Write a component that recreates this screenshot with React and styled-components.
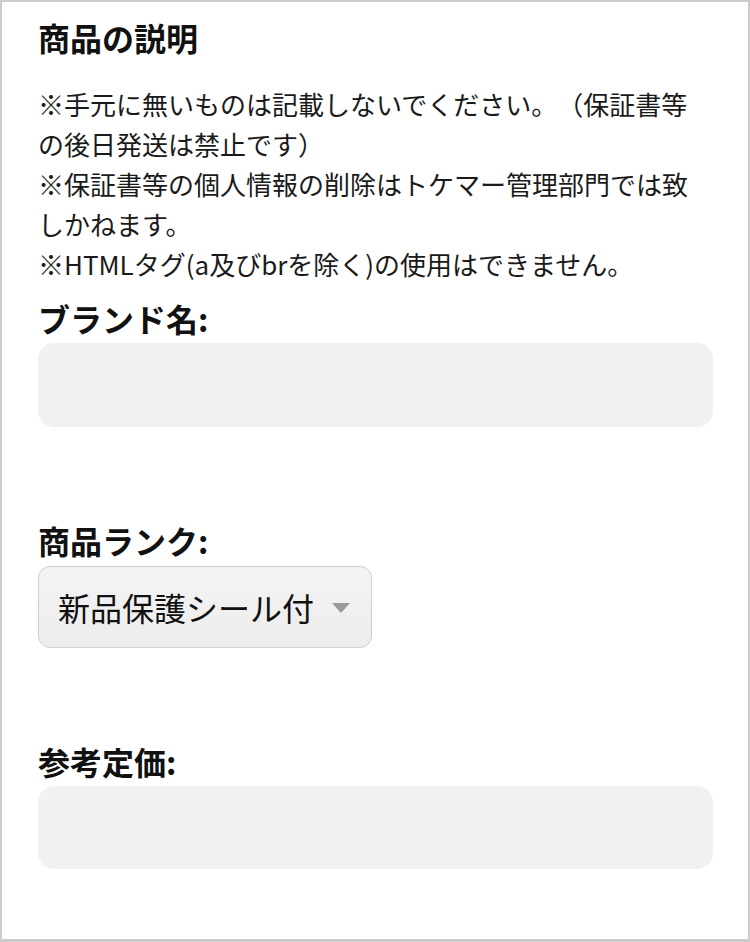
import React from 'react'
import styled, { createGlobalStyle } from 'styled-components'

const GlobalStyle = createGlobalStyle`
html, body {
    margin: 0;
    padding: 0;
    background: #fff;
}
body {
    font-family: "Noto Sans CJK JP", "Noto Sans", sans-serif;
    color: #111;
}
`

function App() {
    return (
        <>
            <GlobalStyle />
            <Frame>
                <Heading>商品の説明</Heading>
                <Notes>
                    <p>※手元に無いものは記載しないでください。（保証書等の後日発送は禁止です）</p>
                    <p>※保証書等の個人情報の削除はトケマー管理部門では致しかねます。</p>
                    <p>※HTMLタグ(a及びbrを除く)の使用はできません。</p>
                </Notes>

                <Field>
                    <Label>ブランド名:</Label>
                    <TextBox type="text" />
                </Field>

                <Field $spaced>
                    <Label>商品ランク:</Label>
                    <Select>
                        <span>新品保護シール付</span>
                        <svg width="18" height="10" viewBox="0 0 18 10">
                            <path d="M0 0 L18 0 L9 10 Z" fill="#9a9a9a" />
                        </svg>
                    </Select>
                </Field>

                <Field $spaced>
                    <Label>参考定価:</Label>
                    <TextBox type="text" $short />
                </Field>
            </Frame>
        </>
    )
}

export default App

const Frame = styled.div`
box-sizing: border-box;
width: 750px;
height: 942px;
border: 2px solid #cccccc;
border-bottom-width: 3px;
padding: 13px 35px 0 36px;
display: flex;
flex-direction: column;
overflow: hidden;
`

const Heading = styled.h2`
margin: 0;
font-size: 32px;
line-height: 44px;
font-weight: 700;
color: #111;
`

const Notes = styled.div`
margin-top: 25px;
font-size: 26px;
line-height: 40px;
color: #1a1a1a;
text-spacing-trim: space-all;

p {
    margin: 0;
}
`

const Field = styled.div`
display: flex;
flex-direction: column;
align-items: flex-start;
margin-top: ${p => (p.$spaced ? '91px' : '12px')};
`

const Label = styled.label`
font-size: 32px;
line-height: 44px;
font-weight: 700;
color: #111;
margin-bottom: 3px;
`

const TextBox = styled.input`
box-sizing: border-box;
width: 100%;
height: ${p => (p.$short ? '83px' : '84px')};
border: none;
outline: none;
border-radius: 16px;
background: #f1f1f1;
padding: 0 20px;
font-family: inherit;
font-size: 28px;
`

const Select = styled.div`
box-sizing: border-box;
height: 82px;
display: flex;
align-items: center;
gap: 18px;
padding: 0 21px 0 19px;
margin-top: 1px;
border: 1.5px solid #cfcfcf;
border-radius: 12px;
background: linear-gradient(#f3f3f3, #ededed);
font-size: 32px;
color: #111;

svg {
    display: block;
    margin-top: 2px;
}
`
